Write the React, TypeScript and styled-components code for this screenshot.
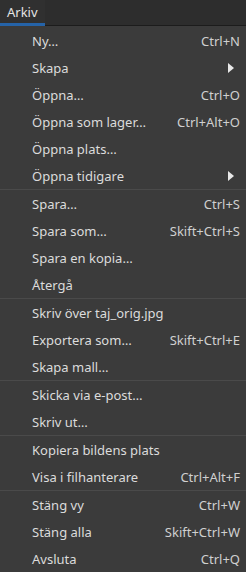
import styled, { createGlobalStyle } from "styled-components";

const GlobalStyle = createGlobalStyle`
  html, body {
    margin: 0;
    padding: 0;
    background: #3b3b3b;
  }
  body {
    font-family: "Noto Sans", "Open Sans", sans-serif;
    font-size: 13px;
    color: #dcdcdc;
  }
`;

const MenuBar = styled.div`
  display: flex;
  height: 25px;
  background: #2d2d2d;
  border-bottom: 1px solid #1c1c1c;
`;

const MenuTab = styled.div`
  display: flex;
  align-items: center;
  height: 23px;
  padding: 0 7px;
  border-bottom: 3px solid #2563a8;
  margin-bottom: -1px;
  background: #303030;
  color: #e4e4e4;
`;

const Menu = styled.div`
  display: flex;
  flex-direction: column;
  padding-top: 1px;
  background: #3b3b3b;
`;

const Item = styled.div`
  display: flex;
  align-items: center;
  justify-content: space-between;
  height: 27px;
  padding: 0 6px 0 32px;
  white-space: nowrap;
`;

const Label = styled.span`
  color: #dcdcdc;
`;

const Shortcut = styled.span`
  color: #d0d0d0;
`;

const Arrow = styled.span`
  width: 0;
  height: 0;
  margin-right: 6px;
  border-top: 5px solid transparent;
  border-bottom: 5px solid transparent;
  border-left: 6px solid #e8e8e8;
`;

const Separator = styled.div`
  height: 1px;
  background: #4a4a4a;
`;

type Entry = { label: string; shortcut?: string; submenu?: boolean } | "sep";

const entries: Entry[] = [
  { label: "Ny…", shortcut: "Ctrl+N" },
  { label: "Skapa", submenu: true },
  { label: "Öppna…", shortcut: "Ctrl+O" },
  { label: "Öppna som lager…", shortcut: "Ctrl+Alt+O" },
  { label: "Öppna plats…" },
  { label: "Öppna tidigare", submenu: true },
  "sep",
  { label: "Spara…", shortcut: "Ctrl+S" },
  { label: "Spara som…", shortcut: "Skift+Ctrl+S" },
  { label: "Spara en kopia…" },
  { label: "Återgå" },
  "sep",
  { label: "Skriv över taj_orig.jpg" },
  { label: "Exportera som…", shortcut: "Skift+Ctrl+E" },
  { label: "Skapa mall…" },
  "sep",
  { label: "Skicka via e-post…" },
  { label: "Skriv ut…" },
  "sep",
  { label: "Kopiera bildens plats" },
  { label: "Visa i filhanterare", shortcut: "Ctrl+Alt+F" },
  "sep",
  { label: "Stäng vy", shortcut: "Ctrl+W" },
  { label: "Stäng alla", shortcut: "Skift+Ctrl+W" },
  { label: "Avsluta", shortcut: "Ctrl+Q" },
];

export default function App() {
  return (
    <>
      <GlobalStyle />
      <MenuBar>
        <MenuTab>Arkiv</MenuTab>
      </MenuBar>
      <Menu>
        {entries.map((e, i) =>
          e === "sep" ? (
            <Separator key={i} />
          ) : (
            <Item key={i}>
              <Label>{e.label}</Label>
              {e.shortcut && <Shortcut>{e.shortcut}</Shortcut>}
              {e.submenu && <Arrow />}
            </Item>
          )
        )}
      </Menu>
    </>
  );
}
